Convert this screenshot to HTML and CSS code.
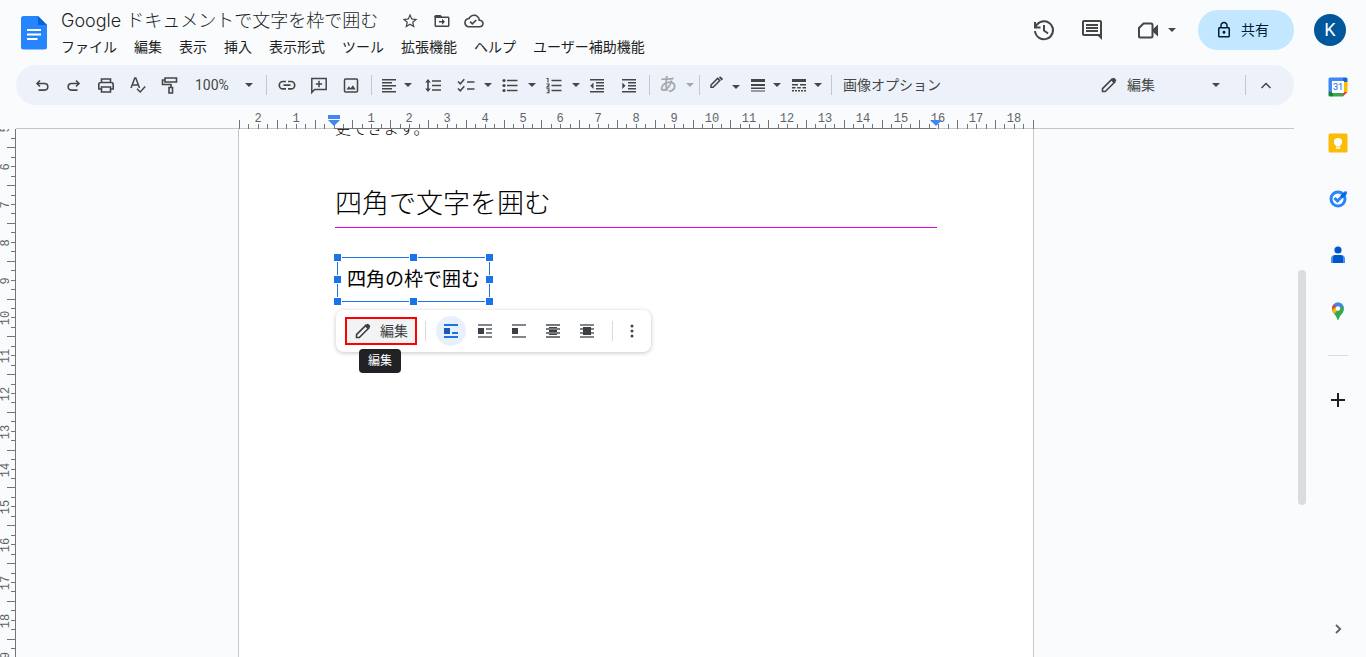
FILE: index.html
```html
<!DOCTYPE html>
<html lang="ja">
<head>
<meta charset="utf-8">
<title>Google ドキュメントで文字を枠で囲む</title>
<link rel="stylesheet" href="styles.css">
</head>
<body>
<svg class="sprite" aria-hidden="true">
  <symbol id="pencil" viewBox="0 0 18 18"><path d="M2.500 15.500v-2.800L12 3.200l2.800 2.800-9.500 9.500z" fill="none" stroke="currentColor" stroke-width="1.600"/><path d="M10.800 4.200l1.900-1.900q1-1 2 0l1 1q1 1 0 2l-1.900 1.900z" fill="currentColor"/></symbol>
  <symbol id="caret" viewBox="0 0 10 10"><path d="M1 3h8L5 7z" fill="currentColor"/></symbol>
</svg>

<div class="app">
<header class="header">
  <a class="logo" href="#" aria-label="ドキュメント ホーム">
    <svg width="26" height="35" viewBox="0 0 26 35"><path d="M2.500 1H17l9 9V32a2.500 2.500 0 0 1-2.500 2.500h-21A2.500 2.500 0 0 1 0 32V3.500A2.500 2.500 0 0 1 2.500 1z" fill="#2684fc"/><path d="M17 1l9 9h-9z" fill="#0066da"/><path d="M6 14h14v2H6zM6 18.500h14v2H6zM6 23h10.500v2H6z" fill="#fff"/></svg>
  </a>
  <div class="doc-info">
    <div class="title-row">
      <h1 class="title">Google ドキュメントで文字を枠で囲む</h1>
      <button class="mini" aria-label="スター"><svg width="18" height="18" viewBox="0 0 24 24"><path d="M22 9.240l-7.190-.62L12 2 9.190 8.630 2 9.240l5.460 4.730L5.820 21 12 17.270 18.180 21l-1.630-7.030zM12 15.400l-3.760 2.270 1-4.280-3.320-2.880 4.380-.38L12 6.100l1.710 4.040 4.380.38-3.320 2.880 1 4.280z" fill="currentColor"/></svg></button>
      <button class="mini" aria-label="移動"><svg width="18" height="18" viewBox="0 0 24 24"><path d="M20 6h-8l-2-2H4c-1.100 0-2 .9-2 2v12c0 1.100.9 2 2 2h16c1.100 0 2-.9 2-2V8c0-1.100-.9-2-2-2zm0 12H4V8h16zm-8-1l4-4-4-4v3H8v2h4z" fill="currentColor"/><path d="M2 5h9v3H2z" fill="currentColor"/></svg></button>
      <button class="mini" aria-label="保存状態"><svg width="20" height="18" viewBox="0 0 24 22"><path d="M19.350 9.040C18.670 5.590 15.640 3 12 3 9.110 3 6.600 4.640 5.350 7.040 2.340 7.360 0 9.910 0 13c0 3.310 2.690 6 6 6h13c2.760 0 5-2.240 5-5 0-2.640-2.050-4.780-4.650-4.960zM19 17H6c-2.210 0-4-1.790-4-4s1.790-4 4-4h.71C7.370 6.690 9.480 5 12 5c3.040 0 5.500 2.460 5.500 5.500v.5H19c1.660 0 3 1.340 3 3s-1.340 3-3 3zm-9-3.800l-2.100-2.100L6.500 12.500 10 16l5.500-5.500-1.400-1.400z" fill="currentColor"/></svg></button>
    </div>
    <nav class="menu">
      <button>ファイル</button><button>編集</button><button>表示</button><button>挿入</button><button>表示形式</button><button>ツール</button><button>拡張機能</button><button>ヘルプ</button><button>ユーザー補助機能</button>
    </nav>
  </div>
  <div class="actions">
    <button class="action" aria-label="変更履歴"><svg width="24" height="24" viewBox="0 0 24 24" fill="none" stroke="currentColor" stroke-width="2"><path d="M3 13A9 9 0 1 0 5 6.500L3 9M3 4v5.500h5.500M12 7v5.500l4 3"/></svg></button>
    <button class="action" aria-label="コメント"><svg width="24" height="24" viewBox="0 0 24 24"><path d="M21.990 4c0-1.100-.89-2-1.990-2H4c-1.100 0-2 .9-2 2v12c0 1.100.9 2 2 2h14l4 4zM20 4v12H4V4zM6 12h12v2H6zm0-3h12v2H6zm0-3h12v2H6z" fill="currentColor"/></svg></button>
    <button class="action meet" aria-label="会議"><svg width="24" height="24" viewBox="0 0 24 24"><path d="M3 18.500V10l4.500-4.500H15q1.500 0 1.500 1.500v11q0 1.500-1.500 1.500H4q-1 0-1-1z" fill="none" stroke="currentColor" stroke-width="2"/><path d="M17 11l5-4.500v12L17 14z" fill="currentColor"/></svg><svg width="10" height="10"><use href="#caret"/></svg></button>
    <button class="share"><svg width="18" height="18" viewBox="0 0 24 24"><path d="M18 8h-1V6c0-2.760-2.240-5-5-5S7 3.240 7 6v2H6c-1.100 0-2 .9-2 2v10c0 1.100.9 2 2 2h12c1.100 0 2-.9 2-2V10c0-1.100-.9-2-2-2zM9 6c0-1.660 1.340-3 3-3s3 1.340 3 3v2H9zm9 14H6V10h12zm-6-3c1.100 0 2-.9 2-2s-.9-2-2-2-2 .9-2 2 .9 2 2 2z" fill="currentColor"/></svg>共有</button>
    <button class="avatar">K</button>
  </div>
</header>

<main class="workspace">
  <div class="toolbar" role="toolbar">
    <button class="tool" aria-label="元に戻す"><svg viewBox="0 0 18 18" fill="none" stroke="currentColor" stroke-width="1.600"><path d="M7 4.500L4 7.500l3 3M4 7.500h7.500a3.300 3.300 0 0 1 0 6.600H5.500"/></svg></button>
    <button class="tool" aria-label="やり直し"><svg viewBox="0 0 18 18" fill="none" stroke="currentColor" stroke-width="1.600"><path d="M11 4.500l3 3-3 3M14 7.500H6.500a3.300 3.300 0 0 0 0 6.600h6"/></svg></button>
    <button class="tool" aria-label="印刷"><svg viewBox="0 0 18 18" fill="none" stroke="currentColor" stroke-width="1.600"><path d="M4.500 6.500v-3.500h9v3.500M4.500 13H1.800V8.500q0-2 2-2h10.400q2 0 2 2v4.500h-2.700M4.500 11h9v5h-9z"/></svg></button>
    <button class="tool" aria-label="スペルチェック"><svg viewBox="0 0 18 18" fill="none" stroke="currentColor" stroke-width="1.500"><path d="M2 12L5.800 2h1L10.500 12M3.300 9h6M8 12.800l3.200 3.200 5-5.500"/></svg></button>
    <button class="tool" aria-label="書式を貼り付け"><svg viewBox="0 0 18 18" fill="none" stroke="currentColor" stroke-width="1.600"><path d="M4 2h11.500v4H4zM4 4H1.500V8.500H10v2.500M8 11.500h3.500v5.500H8z"/></svg></button>
    <button class="zoom">100%<svg class="caret"><use href="#caret"/></svg></button>
    <span class="sep"></span>
    <button class="tool" aria-label="リンク"><svg viewBox="0 0 18 18" fill="none" stroke="currentColor" stroke-width="1.700"><path d="M8 5.500H5a3.700 3.700 0 0 0 0 7.400h3M10 5.500h3a3.700 3.700 0 0 1 0 7.400h-3M5.500 9.200h7"/></svg></button>
    <button class="tool" aria-label="コメントを追加"><svg viewBox="0 0 18 18" fill="none" stroke="currentColor" stroke-width="1.500"><path d="M1.800 16.500V2.500H16.200v11H4.600zM9 4.800v6.400M5.800 8h6.400"/></svg></button>
    <button class="tool" aria-label="画像を挿入"><svg viewBox="0 0 18 18"><rect x="2.500" y="3" width="13" height="13" rx="1" fill="none" stroke="currentColor" stroke-width="1.500"/><path d="M4.500 13.500l2.300-3.300 1.800 2.100 2.300-3 2.800 4.200z" fill="currentColor"/></svg></button>
    <span class="sep"></span>
    <button class="drop" aria-label="配置"><svg viewBox="0 0 18 18" fill="currentColor"><path d="M2 3h14v1.500H2zM2 6h10v1.500H2zM2 9h14v1.500H2zM2 12h10v1.500H2zM2 15h14v1.500H2z"/></svg><svg class="caret"><use href="#caret"/></svg></button>
    <button class="tool" aria-label="行間隔"><svg viewBox="0 0 18 18" stroke="currentColor" stroke-width="1.600"><path d="M8 5h9M8 9.500h9M8 14h9M4 5.500v8"/><path d="M1.200 6.500L4 3l2.800 3.500zM1.200 12.500L4 16l2.800-3.500z" fill="currentColor" stroke="none"/></svg></button>
    <div class="lists">
      <button class="drop wide" aria-label="チェックリスト"><svg viewBox="0 0 18 18" fill="none" stroke="currentColor" stroke-width="1.600"><path d="M10 6h7.500M10 13h7.500M1 5.500l2.300 2.300 4-4.500M1 12.500l2.300 2.300 4-4.500"/></svg><svg class="caret"><use href="#caret"/></svg></button>
      <button class="drop wide" aria-label="箇条書き"><svg viewBox="0 0 18 18" stroke="currentColor" stroke-width="1.600"><path d="M6 4.500h10.500M6 9.500h10.500M6 14.500h10.500"/><g fill="currentColor" stroke="none"><circle cx="3" cy="4.500" r="1.600"/><circle cx="3" cy="9.500" r="1.600"/><circle cx="3" cy="14.500" r="1.600"/></g></svg><svg class="caret"><use href="#caret"/></svg></button>
      <button class="drop wide" aria-label="番号付きリスト"><svg viewBox="0 0 18 18" fill="none" stroke="currentColor"><path d="M6.500 4.500h10M6.500 9.500h10M6.500 14.500h10" stroke-width="1.600"/><path d="M1.500 2.500H3v4M1.500 8h2.500v1.200L2 11h2.500M1.500 12.700h2.500v4H1.500M2.500 14.700H4" stroke-width="1.100"/></svg><svg class="caret"><use href="#caret"/></svg></button>
    </div>
    <button class="tool" aria-label="インデント減"><svg viewBox="0 0 18 18" fill="currentColor"><path d="M2 3h14v1.500H2zM8 6h8v1.500H8zM8 9h8v1.500H8zM8 12h8v1.500H8zM2 15h14v1.500H2zM5.500 6.500v6.500L2.300 9.700z"/></svg></button>
    <button class="tool" aria-label="インデント増"><svg viewBox="0 0 18 18" fill="currentColor"><path d="M2 3h14v1.500H2zM8 6h8v1.500H8zM8 9h8v1.500H8zM8 12h8v1.500H8zM2 15h14v1.500H2zM2.300 6.500v6.500l3.200-3.300z"/></svg></button>
    <span class="sep"></span>
    <button class="drop wide ime" disabled><span>あ</span><svg class="caret"><use href="#caret"/></svg></button>
    <span class="sep"></span>
    <button class="drop" aria-label="枠線の色"><svg viewBox="0 0 18 18"><path d="M3 11.300V9L9.600 2.400l2.200 2.200-6.700 6.700z" fill="none" stroke="currentColor" stroke-width="1.500"/><path d="M10.800 1.600l1.400-1.400 2.900 2.900-1.400 1.400z" fill="currentColor"/></svg><svg class="caret" viewBox="0 0 10 10"><path d="M1 5h8L5 9z" fill="currentColor"/></svg></button>
    <button class="drop" aria-label="枠線の太さ"><svg viewBox="0 0 18 18" fill="currentColor"><path d="M2 3h14v3H2zM2 8h14v2H2zM2 11.500h14V13H2zM2 14.500h14v1H2z"/></svg><svg class="caret"><use href="#caret"/></svg></button>
    <button class="drop" aria-label="枠線の種類"><svg viewBox="0 0 18 18" fill="currentColor"><path d="M2 3h14v3H2zM2 8h6v1.500H2zM10 8h6v1.500h-6zM2 11h3.500v1.500H2zM7.200 11h3.600v1.500H7.200zM12.500 11H16v1.500h-3.500zM2 14h2v1.500H2zM5 14h2v1.500H5zM8 14h2v1.500H8zM11 14h2v1.500h-2zM14 14h2v1.500h-2z"/></svg><svg class="caret"><use href="#caret"/></svg></button>
    <span class="sep"></span>
    <button class="text-tool">画像オプション</button>
    <button class="mode"><svg width="18" height="18"><use href="#pencil"/></svg><span>編集</span><svg class="caret"><use href="#caret"/></svg></button>
    <span class="sep"></span>
    <button class="tool" aria-label="メニューを非表示"><svg viewBox="0 0 18 18" fill="none" stroke="currentColor" stroke-width="1.500"><path d="M4.500 12L9 7.500l4.500 4.500"/></svg></button>
  </div>

  <div class="ruler-row">
    <svg class="ruler-h" id="ruler-h" height="24"></svg>
  </div>

  <div class="stage">
    <svg class="ruler-v" id="ruler-v" width="16"></svg>
    <div class="canvas">
      <article class="page">
        <p class="body-text">更できます。</p>
        <h2 class="heading">四角で文字を囲む</h2>
        <div class="drawing">
          四角の枠で囲む
          <i class="handle n w"></i><i class="handle n c"></i><i class="handle n e"></i>
          <i class="handle m w"></i><i class="handle m e"></i>
          <i class="handle s w"></i><i class="handle s c"></i><i class="handle s e"></i>
        </div>
        <div class="float-bar" role="toolbar">
          <button class="edit"><svg width="18" height="18"><use href="#pencil"/></svg>編集</button>
          <span class="tooltip" role="tooltip">編集</span>
          <span class="float-sep"></span>
          <div class="wraps">
            <button class="wrap active" aria-label="行内"><svg viewBox="0 0 16 16" fill="currentColor"><path d="M1 1h14v2H1zM1 13h14v2H1zM9 9h6v2H9z"/><path d="M1 5h6v6H1z" fill="#185abc"/></svg></button>
            <button class="wrap" aria-label="テキストを折り返す"><svg viewBox="0 0 16 16" fill="#80868b"><path d="M1 1h14v2H1zM1 13h14v2H1zM9 5h6v2H9zM9 9h6v2H9z"/><path d="M1 5h6v6H1z" fill="#3c4043"/></svg></button>
            <button class="wrap" aria-label="テキストを分割"><svg viewBox="0 0 16 16" fill="#80868b"><path d="M1 1h14v2H1zM1 13h14v2H1z"/><path d="M1 5h6v6H1z" fill="#3c4043"/></svg></button>
            <button class="wrap" aria-label="背面"><svg viewBox="0 0 16 16"><path d="M4 4h8v8H4z" fill="#3c4043"/><path d="M1 1h14v2H1zM1 5h14v2H1zM1 9h14v2H1zM1 13h14v2H1z" fill="#74797e"/></svg></button>
            <button class="wrap" aria-label="前面"><svg viewBox="0 0 16 16"><path d="M1 1h14v2H1zM1 5h14v2H1zM1 9h14v2H1zM1 13h14v2H1z" fill="#80868b"/><path d="M4 4h8v8H4z" fill="#3c4043"/></svg></button>
          </div>
          <span class="float-sep end"></span>
          <button class="wrap" aria-label="その他"><svg viewBox="0 0 16 16" fill="#444746"><circle cx="8" cy="3" r="1.500"/><circle cx="8" cy="8" r="1.500"/><circle cx="8" cy="13" r="1.500"/></svg></button>
        </div>
      </article>
    </div>
    <div class="scroll"><div class="thumb"></div></div>
  </div>
</main>

<aside class="side">
  <button aria-label="カレンダー"><svg width="20" height="20" viewBox="0 0 20 20"><path d="M2 .5h13V5H5v10H.5V2A1.500 1.500 0 0 1 2 .5z" fill="#4285f4"/><path d="M15 .5h3A1.500 1.500 0 0 1 19.500 2v3H15z" fill="#1967d2"/><path d="M15 5h4.500v10H15z" fill="#fbbc04"/><path d="M.5 15H5v4.500H2A1.500 1.500 0 0 1 .5 18z" fill="#188038"/><path d="M5 15h10v4.500H5z" fill="#34a853"/><path d="M15 15h4.500L15 19.500z" fill="#ea4335"/><path d="M4 4h12v12H4z" fill="#fff"/><text x="10" y="13" class="cal">31</text></svg></button>
  <button aria-label="Keep"><svg width="20" height="20" viewBox="0 0 20 20"><rect x=".5" y=".5" width="19" height="19" rx="1.500" fill="#fbbc04"/><path d="M10 5a4 4 0 0 0-2.200 7.400v1h4.400v-1A4 4 0 0 0 10 5zM7.800 14.300h4.400v1.500H7.800z" fill="#fff"/></svg></button>
  <button aria-label="ToDo リスト"><svg width="20" height="20" viewBox="0 0 20 20" fill="none"><circle cx="10" cy="10" r="7" stroke="#2684fc" stroke-width="3"/><path d="M6.500 9l3 3L17 4.500" stroke="#2684fc" stroke-width="3"/><path d="M13.500 8L18 3.500" stroke="#0066da" stroke-width="3.200"/><circle cx="17.800" cy="3.500" r="1.300" fill="#2684fc"/></svg></button>
  <button aria-label="連絡先"><svg width="20" height="20" viewBox="0 0 20 20"><circle cx="10" cy="5" r="3.600" fill="#0057cc"/><path d="M3 18v-4a4 4 0 0 1 4-4h6a4 4 0 0 1 4 4v4z" fill="#4c8df6"/><path d="M5 18v-5a3 3 0 0 1 3-3h4a3 3 0 0 1 3 3v5z" fill="#0057cc"/></svg></button>
  <button aria-label="マップ"><svg width="20" height="20" viewBox="0 0 20 20"><path d="M10 19c-.8 0-.8-2-2.200-4C6 12.500 4 11 4 7.500a6 6 0 0 1 12 0c0 3.500-2 5-3.800 7.500-1.400 2-1.400 4-2.200 4z" fill="#34a853"/><path d="M5.500 3.500A6 6 0 0 1 15.300 4.700L10 9z" fill="#4285f4"/><path d="M5.500 3.500A6 6 0 0 0 4.300 9L10 8z" fill="#ea4335"/><path d="M4.200 9q.4 2 2 4L12 6.500 8 6z" fill="#fbbc04"/><circle cx="10" cy="7.500" r="2.200" fill="#fff"/></svg></button>
  <span class="side-line"></span>
  <button aria-label="アドオンを取得"><svg width="20" height="20" viewBox="0 0 20 20"><path d="M9 3h2v6h6v2h-6v6H9v-6H3V9h6z" fill="#1f1f1f"/></svg></button>
  <button class="collapse" aria-label="サイドパネルを非表示"><svg width="20" height="20" viewBox="0 0 20 20" fill="none" stroke="#5f6368" stroke-width="1.800"><path d="M8 6l4.200 4L8 14"/></svg></button>
</aside>
</div>
<script src="rulers.js"></script>
</body>
</html>
```

FILE: styles.css
```css
* { box-sizing: border-box; }

body {
  margin: 0;
  background: #f9fbfd;
  color: #1f1f1f;
  font: 400 14px/20px Roboto, "Noto Sans CJK JP", sans-serif;
}

button {
  display: flex;
  align-items: center;
  justify-content: center;
  padding: 0;
  border: 0;
  background: none;
  color: inherit;
  font: inherit;
  white-space: nowrap;
}

svg { display: block; flex: none; }
.sprite { position: absolute; width: 0; height: 0; }

.app {
  display: grid;
  grid-template: auto 1fr / minmax(0, 1fr) 56px;
  height: 100vh;
  overflow: hidden;
}

/* Header */
.header {
  grid-column: 1 / -1;
  display: flex;
  align-items: flex-start;
  height: 65px;
  padding: 0 20px;
}
.logo { margin: 15px 6px 0 1px; }
.title-row { display: flex; align-items: center; gap: 12px; height: 24px; margin: 9px 0 4px 8px; }
.title {
  margin: 0 10px 0 0;
  font: 300 18px/24px Inter, "Noto Sans CJK JP", sans-serif;
}
.mini { width: 20px; height: 20px; color: #444746; }
.menu { display: flex; gap: 1px; }
.menu button { padding: 0 8px; height: 20px; }
.actions { display: flex; align-items: center; margin-left: auto; height: 60px; color: #444746; }
.action { width: 48px; height: 40px; }
.meet { width: 64px; margin: 0 10px 0 8px; gap: 7px; }
.share {
  gap: 8px;
  width: 96px;
  height: 40px;
  padding-right: 8px;
  border-radius: 20px;
  background: #c2e7ff;
  color: #001d35;
}
.avatar {
  width: 32px;
  height: 32px;
  margin-left: 20px;
  border-radius: 50%;
  background: #00579c;
  color: #fff;
  font-size: 18px;
}

/* Toolbar */
.workspace { display: flex; flex-direction: column; min-width: 0; min-height: 0; }
.toolbar {
  display: flex;
  align-items: center;
  height: 40px;
  margin: 0 16px;
  padding: 0 12px 0 10px;
  border-radius: 20px;
  background: #edf2fa;
  color: #444746;
  flex: none;
}
.toolbar button { flex: none; height: 30px; }
.tool { width: 32px; }
.tool svg, .drop svg { width: 18px; height: 18px; }
.toolbar .caret { width: 10px; height: 10px; }
.sep { width: 1px; height: 20px; margin: 0 4px; background: #c7c7c7; }
.zoom { width: 76px; padding: 0 8px 0 9px; justify-content: space-between; }
.drop { gap: 5px; padding: 0 4px; }
.wide { gap: 8px; padding-right: 0; }
.lists { display: flex; gap: 4px; margin-left: 4px; }
.ime { margin-left: 1px; color: #a5a8ab; font-size: 18px; font-weight: 500; }
.text-tool { padding: 0 7px; }
.mode { width: 134px; margin: 0 12px 0 auto; padding: 0 8px 0 5px; gap: 9px; }
.mode .caret { margin-left: auto; }

/* Rulers */
.ruler-row {
  display: flex;
  justify-content: center;
  height: 24px;
  margin: 0 16px;
  padding-right: 38px;
  box-shadow: inset 0 -1px #c4c7c5;
  flex: none;
}
.ruler-h { width: 796px; overflow: visible; }
.ruler-v { height: 100%; overflow: hidden; }
.label {
  fill: #5f6368;
  font: 12px "Liberation Mono", monospace;
  text-anchor: middle;
}
.tick { fill: #757575; }
.marker { fill: #4285f4; }

/* Document */
.stage { display: flex; flex: 1; min-height: 0; }
.canvas {
  display: flex;
  flex: 1;
  justify-content: center;
  padding-right: 38px;
  overflow: hidden;
}
.page {
  width: 796px;
  padding: 0 96px;
  border: solid #c7c7c7;
  border-width: 0 1px;
  background: #fff;
  color: #000;
}
.body-text { margin: -12px 0 43px; font-size: 16px; font-weight: 300; line-height: 24px; }
.heading {
  margin: 0;
  padding-bottom: 3px;
  border-bottom: 1px solid #e000e0;
  font-size: 27px;
  font-weight: 300;
  line-height: 40px;
}
.drawing {
  position: relative;
  width: 153px;
  height: 45px;
  margin: 29px 0 8px 2px;
  border: 1px solid #1a73e8;
  font-size: 19px;
  line-height: 43px;
  text-align: center;
  white-space: nowrap;
}
.handle {
  position: absolute;
  width: 9px;
  height: 9px;
  border: 1px solid #fff;
  background: #1a73e8;
}
.n { top: -5px; }
.m { top: 17px; }
.s { bottom: -5px; }
.w { left: -5px; }
.c { left: 71px; }
.e { right: -5px; }

.float-bar {
  position: relative;
  display: flex;
  align-items: center;
  width: max-content;
  height: 42px;
  margin-left: 1px;
  padding: 0 4px 0 9px;
  border-radius: 8px;
  background: #fff;
  box-shadow: 0 1px 4px rgba(60, 64, 67, .3);
}
.edit {
  gap: 8px;
  width: 72px;
  height: 28px;
  border: 2px solid #f00;
  background: #f1f3f4;
  color: #3c4043;
}
.float-sep { width: 1px; height: 20px; margin: 0 10px 0 8px; background: #dadce0; }
.float-sep.end { margin: 0 4px 0 10px; }
.wraps { display: flex; gap: 4px; }
.wrap { width: 30px; height: 30px; border-radius: 50%; }
.wrap svg { width: 16px; height: 16px; }
.active { background: #e8f0fe; color: #1a73e8; }
.tooltip {
  position: absolute;
  top: 39px;
  left: 23px;
  padding: 2px 9px;
  border-radius: 4px;
  background: #202124;
  color: #fff;
  font-size: 12px;
}

.scroll { width: 16px; padding: 141px 4px 0; }
.thumb { height: 235px; border-radius: 4px; background: #dadce0; }

/* Side panel */
.side { display: flex; flex-direction: column; align-items: center; gap: 12px; padding-bottom: 6px; }
.side button { width: 44px; height: 44px; flex: none; }
.side-line { width: 20px; height: 1px; margin: 10px 0; background: #dadce0; flex: none; }
.side .collapse { margin-top: auto; }
.cal { fill: #4285f4; font: 500 9px Roboto, sans-serif; text-anchor: middle; }
```

FILE: rulers.js
```js
const NS = "http://www.w3.org/2000/svg";
const CM = 37.8;

function add(parent, name, attrs, text) {
  const el = document.createElementNS(NS, name);
  for (const key in attrs) el.setAttribute(key, attrs[key]);
  if (text) el.textContent = text;
  parent.appendChild(el);
}

/* Horizontal ruler: zero lies at the left page margin. */
const h = document.getElementById("ruler-h");
const zero = 96;
for (let q = -10; q <= 74; q++) {
  const x = Math.round(zero + q * CM / 4 - 0.5);
  const tall = Math.abs(q % 4) === 2;
  add(h, "rect", { class: "tick", x, y: tall ? 15 : 19, width: 1, height: tall ? 9 : 5 });
  if (q % 4 === 0 && q !== 0) {
    add(h, "text", { class: "label", x, y: 17 }, Math.abs(q / 4));
  }
}
add(h, "rect", { class: "tick", x: zero, y: 23, width: 602, height: 1 });
add(h, "path", { class: "marker", d: "M90 10h12v4H90zM90 15h12l-6 6z" });
add(h, "path", { class: "marker", d: "M692 15h12l-6 6z" });

/* Vertical ruler: scrolled so that 5 cm meets the top edge. */
const v = document.getElementById("ruler-v");
add(v, "rect", { class: "tick", x: 15, y: 0, width: 1, height: "100%" });
for (let q = 20; q <= 76; q++) {
  const y = Math.round((q - 20) * CM / 4 - 0.6);
  const tall = q % 4 === 2;
  add(v, "rect", { class: "tick", x: tall ? 7 : 11, y, width: tall ? 8 : 4, height: 1 });
  if (q % 4 === 0) {
    add(v, "text", { class: "label", transform: `translate(9 ${y + 1}) rotate(-90)` }, q / 4);
  }
}
```
